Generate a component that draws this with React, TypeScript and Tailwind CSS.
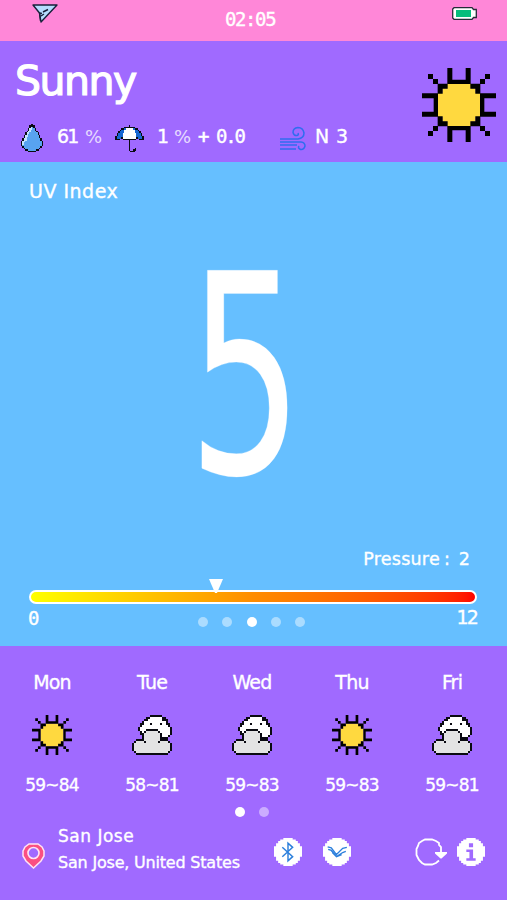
import React from "react";

const CLOUD = [
  ".........KKKKKK.....",
  ".......KKWWWWWWKK...",
  "......KKWWWWWWWKKK..",
  ".....KWWWWWWWWWWWK..",
  "....KKWWWKWWWWKWWKK.",
  "....KWWWWWWWWWWWWWK.",
  "...KWWWWWWWWWWWWWWWK",
  "...KWWWKKKKKKWWWWWWK",
  "....KWKGGGGGGKWWWWWK",
  "....KKGGGGGGGGKWWWWK",
  ".....KGGGGGGGGKWWWK.",
  ".....KGGGGGGGGKKKK..",
  "..KKKKGGGGGGGGKKKK..",
  ".KGGGGKGGGGGGKGGGGK.",
  "KGGGGGGGGGGGGGGGGGGK",
  "KGGGGGGGGGGGGGGGGGGK",
  "KGGGGGGGGGGGGGGGGGGK",
  "KGGGGGGGGGGGGGGGGGGK",
  ".KGGGGGGGGGGGGGGGGK.",
  "..KKKKKKKKKKKKKKKK..",
];

const DROP = [
  ".......KK.......",
  "......KKKK......",
  "......KLBK......",
  ".....KLLBBK.....",
  ".....KLBBBK.....",
  "....KLLBBBBK....",
  "...KLLBBBBBBK...",
  "...KLBBBBBBBK...",
  "..KLLBBBBBBBBK..",
  "..KLBBBBBBBBBK..",
  ".KLLBBBBBBBBBBK.",
  ".KLLBBBBBBBBBBK.",
  "KLLBBBBBBBBBBBBK",
  "KLBBBBBBBBBBBBBK",
  "KLBBBBBBBBBBBBBK",
  "KBBBBBBBBBBBBBBK",
  ".KBBBBBBBBBBBBK.",
  "..KBBBBBBBBBBK..",
  "...KKBBBBBBKK...",
  ".....KKKKKK.....",
];

const UMBRELLA = [
  ".........K.........",
  "......KKKKKKK......",
  "....KKBWWWWWBKK....",
  "...KBBWWWWWWWBBK...",
  "..KBBBWWWWWWWBBBK..",
  ".KBBBWWWWWWWWWBBBK.",
  ".KBBBWWWWWWWWWBBBK.",
  "KBBBBWWWWWWWWWBBBBK",
  "KBBBKWWWWWWWWWKBBBK",
  "KKK..KKKKKKKKK..KKK",
  ".........K.........",
  ".........K.........",
  ".........K.........",
  ".........K.........",
  ".........K.........",
  ".........K...K.....",
  ".........K..KK.....",
  "..........KKK......",
];

const PALETTE: Record<string, string> = {
  K: "#0b0b12",
  W: "#ffffff",
  G: "#e3e3e3",
  B: "#58a3f0",
  L: "#c3e4ff",
};

type PixelsProps = {
  rows: string[];
  className: string;
  colors?: Record<string, string>;
};

function Pixels({ rows, className, colors = {} }: PixelsProps) {
  const palette = { ...PALETTE, ...colors };
  return (
    <svg
      className={className}
      viewBox={`0 0 ${rows[0].length} ${rows.length}`}
      preserveAspectRatio="none"
      shapeRendering="crispEdges"
    >
      {rows.flatMap((row, y) =>
        row.split("").map((c, x) =>
          c === "." ? null : (
            <rect key={`${x}-${y}`} x={x} y={y} width={1} height={1} fill={palette[c]} />
          )
        )
      )}
    </svg>
  );
}

function Sun({ className }: { className: string }) {
  return (
    <svg className={className} viewBox="0 0 222 222">
      <path
        fill="#ffd93f"
        d="M75 47H147V61H161V75H175V147H161V161H147V175H75V161H61V147H47V75H61V61H75Z"
      />
      {[0, 90, 180, 270].map((a) => (
        <g key={a} transform={`rotate(${a} 111 111)`} fill="#000">
          <path d="M76 0H91V35H131V0H146V48H76Z" />
          <path d="M47 47H77V62H62V77H47Z" />
          <path d="M18 18H33V33H48V48H33V33H18Z" />
        </g>
      ))}
    </svg>
  );
}

function Wind() {
  return (
    <svg className="h-[25px] w-[27px]" viewBox="0 0 27 25" fill="none" stroke="#2f6df0" strokeWidth="1.5">
      <path d="M1 13H19Q25 12 25 7Q24 1.5 19 1.5Q14 2 14 6.5Q15 10 18 9.500Q20 9 19 7" />
      <path d="M1 16H22Q26 16.500 26 20Q25 24 21.500 23.500Q18.500 22 20 20" />
      <path d="M1 19H18M1 23H17" />
    </svg>
  );
}

function PaperPlane() {
  return (
    <svg className="mt-1 h-[19px] w-[26px]" viewBox="0 0 26 19" strokeLinejoin="round">
      <path d="M1 1H25L9 18L7.500 9Z" fill="#b5dcff" stroke="#17203a" strokeWidth="1.4" />
      <path d="M7.500 9L8.500 17M7.500 9L10 9.500M11 8L16 5.500M9 12L12 10" stroke="#17203a" strokeWidth="1.4" />
    </svg>
  );
}

function Battery() {
  return (
    <svg className="mt-[7px] h-[13px] w-[25px]" viewBox="0 0 25 13">
      <path d="M2 .7H20L21.500 2.500H24.300V10.500H21.500L20 12.300H2L.7 11V2Z" fill="#fff" stroke="#252c38" strokeWidth="1.3" />
      <rect x="4" y="3" width="15" height="7" fill="#06bd7c" />
    </svg>
  );
}

function Pin() {
  return (
    <svg className="h-[26px] w-[23px]" viewBox="0 0 23 26">
      <path
        d="M7 1H16L20 4L22 8V13L19 18L11.500 25L4 18L1 13V8L3 4Z"
        fill="#fb4f82"
        stroke="#ffe3f4"
        strokeWidth="1.5"
      />
      <circle cx="11.5" cy="10" r="5.500" fill="#a06aff" stroke="#ffe3f4" strokeWidth="1.6" />
    </svg>
  );
}

const DISC = "M9 0H18V1.500H21V3H23V5H25V8H27V18H25V22H23V24H21V25.500H18V27H9V25.500H6V24H4V22H2V18H0V8H2V5H4V3H6V1.500H9Z";

function Disc({ children }: { children: React.ReactNode }) {
  return (
    <svg className="h-[28px] w-[28px] shrink-0" viewBox="0 0 27 27">
      <path d={DISC} fill="#fff" />
      {children}
    </svg>
  );
}

function Refresh() {
  return (
    <svg className="h-[28px] w-[32px] shrink-0" viewBox="0 0 32 28">
      <path
        d="M26 14V9L24 7V5L21 3L17 1.500H10L7 3L4 5L3 8L1.500 11V17L3 20L4 22L7 25L10 26.500H17L21 25L24 22.500"
        fill="none"
        stroke="#fff"
        strokeWidth="1.8"
      />
      <path d="M20 14H32V15.500L26.500 20.500H25.500L20 15.500Z" fill="#fff" />
    </svg>
  );
}

const DAYS = [
  { day: "Mon", sunny: true, range: "59~84" },
  { day: "Tue", sunny: false, range: "58~81" },
  { day: "Wed", sunny: false, range: "59~83" },
  { day: "Thu", sunny: true, range: "59~83" },
  { day: "Fri", sunny: false, range: "59~81" },
];

function Dots({ count, active, className }: { count: number; active: number; className: string }) {
  return (
    <div className={`flex gap-[14.300px] ${className}`}>
      {Array.from({ length: count }, (_, i) => (
        <span
          key={i}
          className={`size-[10px] rounded-full ${i === active ? "bg-white" : "bg-white/45"}`}
        />
      ))}
    </div>
  );
}

const MONO = "font-['DejaVu_Sans_Mono',monospace]";

export default function App() {
  return (
    <div className="flex h-[900px] w-[507px] flex-col overflow-hidden bg-[#a06aff] font-['DejaVu_Sans',sans-serif] leading-none text-white [-webkit-text-stroke:0.35px_white]">
      <header className="grid h-[41px] shrink-0 grid-cols-[193px_227px_1fr] bg-[#ff87d8] pl-8">
        <PaperPlane />
        <span className={`mt-[10px] text-[19px] leading-none tracking-[-1.4px] ${MONO}`}>02:05</span>
        <Battery />
      </header>

      <section className="flex h-[121px] shrink-0 justify-between">
        <div>
          <h1 className="mt-5 ml-[15px] text-[41px] leading-none tracking-[-1.500px] [-webkit-text-stroke:1.2px_white]">
            Sunny
          </h1>
          <div className="mt-[22px] ml-[21px] grid h-7 grid-cols-[36px_28px_30px_42px_17px_26px_16px_63px_36px_21px_20px] items-center text-[19px]">
            <Pixels rows={DROP} className="h-[28px] w-[22px]" />
            <span className="-mt-[3px] tracking-[-1.800px]">61</span>
            <span className="-mt-[3px] text-[18px] opacity-75 [-webkit-text-stroke:0]">%</span>
            <Pixels rows={UMBRELLA} className="h-[27px] w-[29px]" colors={{ B: "#1767d2" }} />
            <span className="-mt-[3px]">1</span>
            <span className="-mt-[3px] text-[18px] opacity-75 [-webkit-text-stroke:0]">%</span>
            <span className="-mt-[3px] -ml-[3px] text-[16px] font-bold">+</span>
            <span className={`-mt-[3px] tracking-[-2.200px] ${MONO}`}>0.0</span>
            <Wind />
            <span className="-mt-[3px]">N</span>
            <span className="-mt-[3px]">3</span>
          </div>
        </div>
        <Sun className="mt-[27px] mr-[11px] size-[74px]" />
      </section>

      <main className="flex h-[484px] shrink-0 flex-col bg-[#66bfff]">
        <h2 className="mt-[20px] ml-[29px] text-[19px] leading-none tracking-[0.500px]">UV Index</h2>
        <div className="flex h-[345px] items-center justify-center pt-[6px] pr-[16px]">
          <span className="scale-x-[0.650] text-[278px] leading-none">5</span>
        </div>
        <div className="mr-[37px] flex h-[33px] items-start justify-end pt-[5px] text-[17.500px]">
          <span className="tracking-[0.250px]">Pressure</span>
          <span className="ml-[4px]">:</span>
          <span className="ml-[9px]">2</span>
        </div>
        <svg className="z-10 -mb-[3px] ml-[209px] h-[14px] w-[14px] shrink-0" viewBox="0 0 14 14">
          <path d="M0 0H14L8 14H6Z" fill="#fff" />
        </svg>
        <div className="mr-[30px] ml-[29px] h-[14px] shrink-0 rounded-full border-2 border-white bg-linear-to-r from-[#ffff00] via-[#ff8c00] to-[#ff0000]" />
        <div className="mr-[30px] ml-[28px] grid grid-cols-[170px_1fr_auto] pt-[5px] text-[19px]">
          <span className={MONO}>0</span>
          <Dots count={5} active={2} className="mt-[8px]" />
          <span className="-mt-px tracking-[-1.800px]">12</span>
        </div>
      </main>

      <section className="mx-[2px] grid shrink-0 grid-cols-[100px_100px_100px_100px_100px] pt-[28px]">
        {DAYS.map((d) => (
          <div key={d.day} className="flex flex-col items-center">
            <span className="-mt-px mb-px text-[19px] leading-none tracking-[-0.800px]">{d.day}</span>
            {d.sunny ? (
              <Sun className="mt-[22px] size-[40px]" />
            ) : (
              <Pixels rows={CLOUD} className="mt-[22px] size-[40px]" />
            )}
            <span className="mt-[22px] text-[17px] leading-none tracking-[-0.800px]">{d.range}</span>
          </div>
        ))}
      </section>
      <Dots count={2} active={0} className="mt-[13px] ml-[234.500px]" />

      <footer className="mt-[11px] flex pl-[22px]">
        <div className="pt-[15px]">
          <Pin />
        </div>
        <div className="ml-[13px] w-[216px] whitespace-nowrap">
          <div className="text-[17px] leading-none tracking-[0.500px]">San Jose</div>
          <div className="mt-[10px] text-[16px] leading-none tracking-[-0.200px]">San Jose, United States</div>
        </div>
        <div className="flex items-start pt-[10px]">
          <Disc>
            <path d="M8 9L18 18L13.500 22V5L18 9L8 18" fill="none" stroke="#2b7fdc" strokeWidth="1.4" />
          </Disc>
          <div className="ml-[21px] flex">
            <Disc>
              <path
                d="M4.500 8.500L8 9.500L13 16L19 10L23 9M5 11L8 12L13 18L19 14L22 13M9 14L13 18L18 16"
                fill="none"
                stroke="#2b7fdc"
                strokeWidth="1.3"
              />
            </Disc>
          </div>
          <div className="ml-[64px] flex gap-[10px]">
            <Refresh />
            <Disc>
              <path d="M11.500 5H15.500V9H11.500ZM9 11H15.500V19.500H18V22H9V19.500H12V13.500H9Z" fill="#a06aff" />
            </Disc>
          </div>
        </div>
      </footer>
    </div>
  );
}
